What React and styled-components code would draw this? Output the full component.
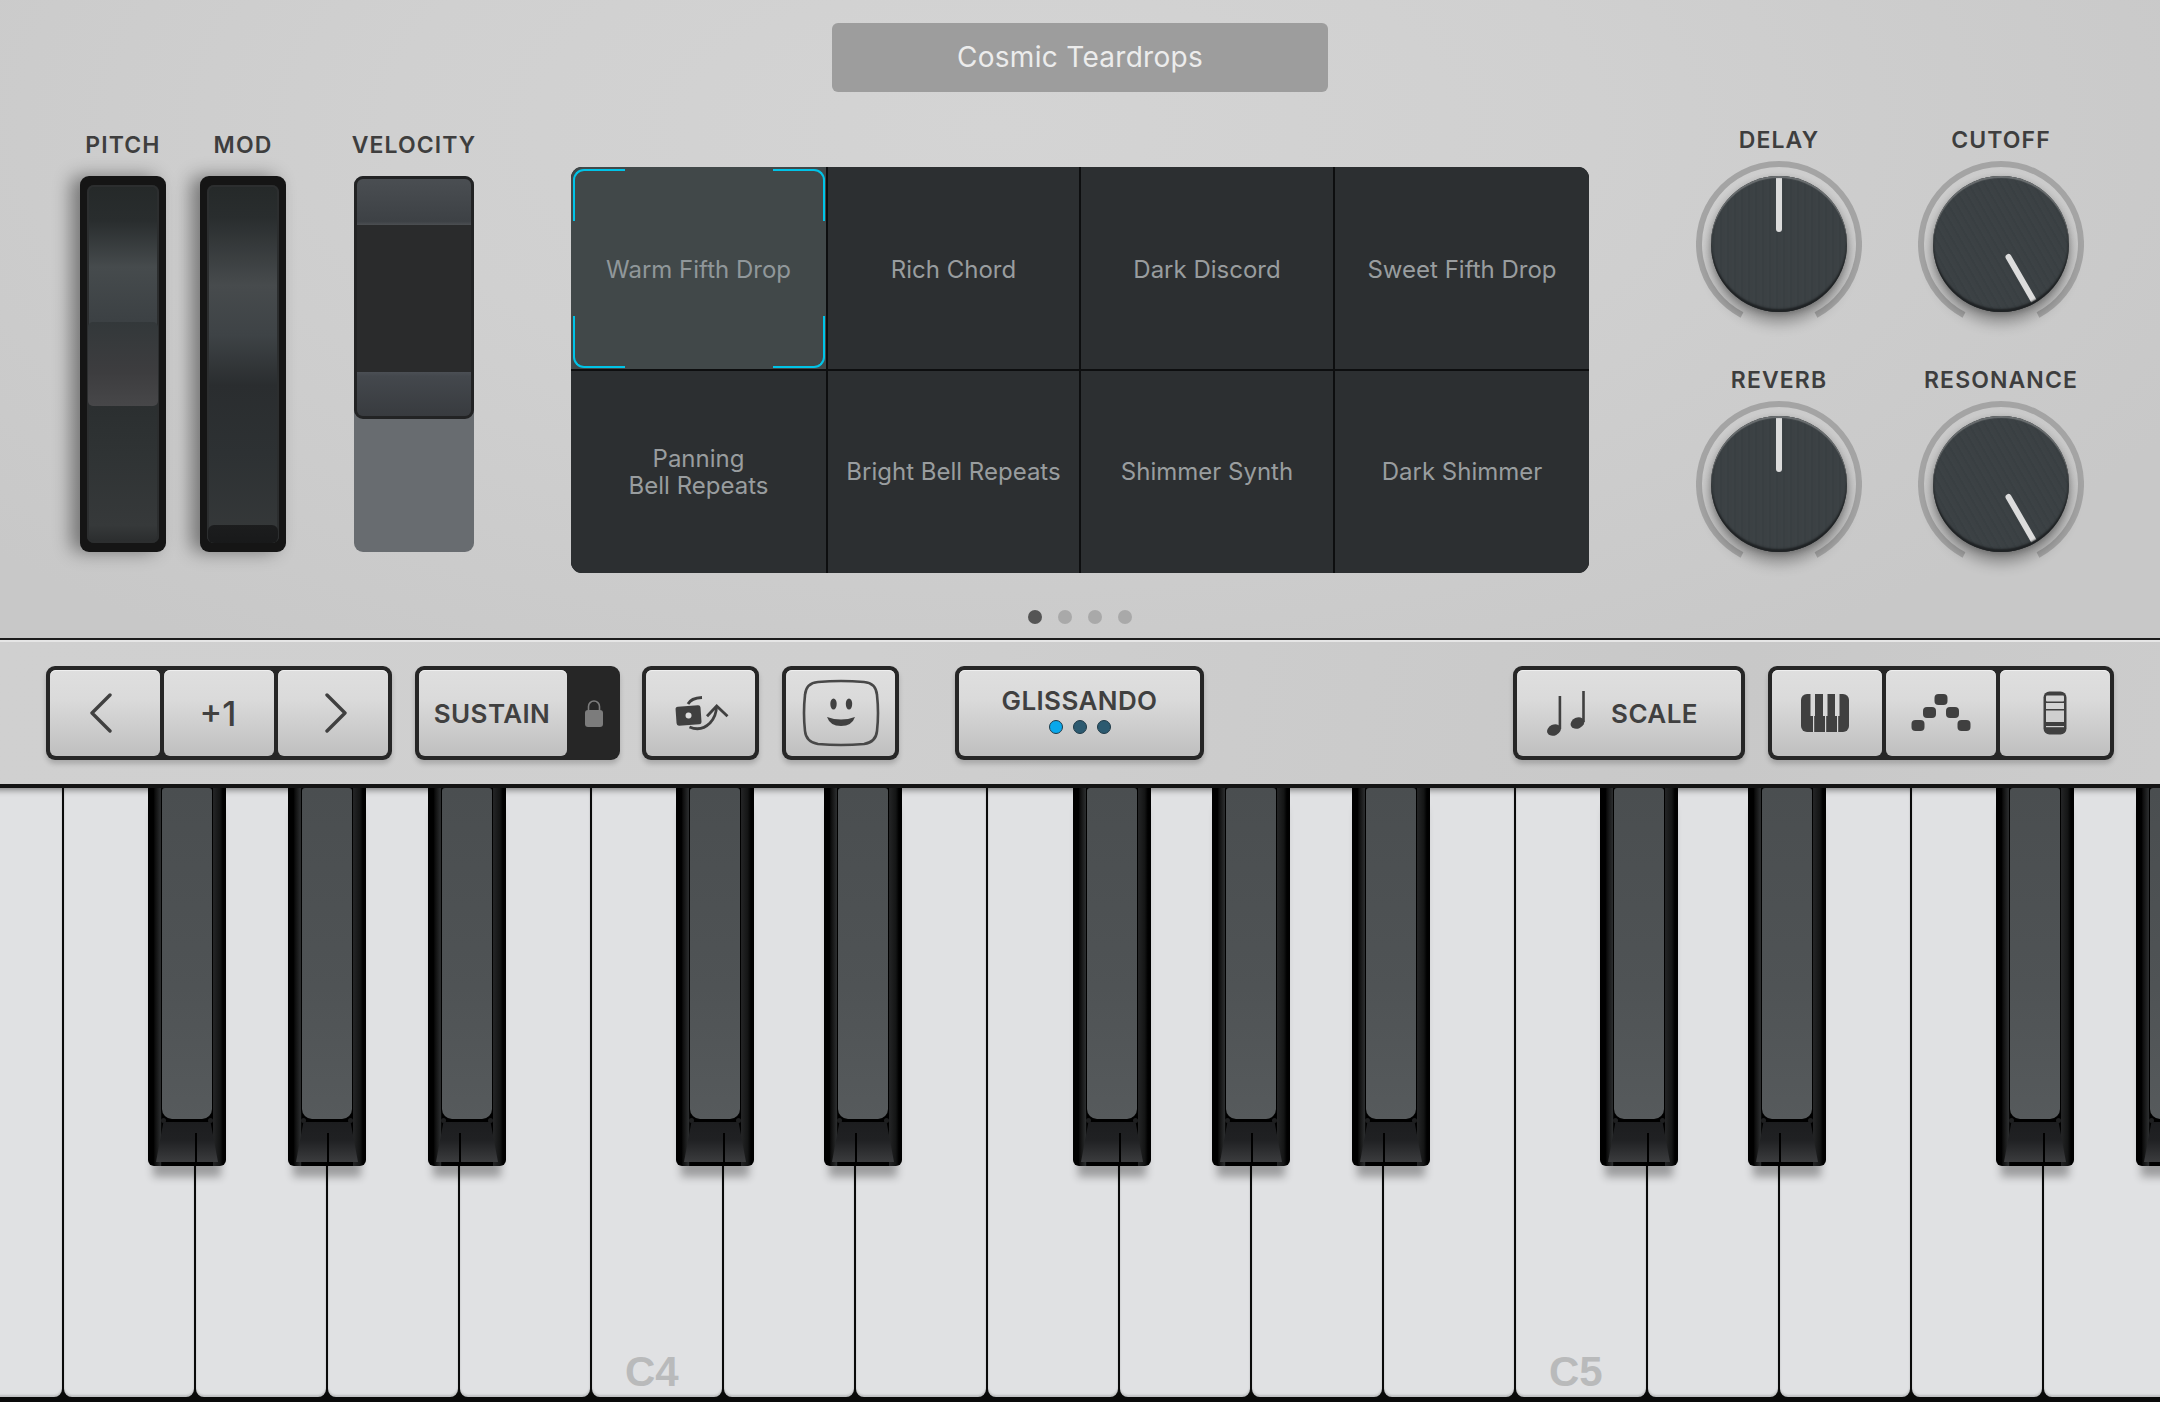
import React from 'react';
import styled, { createGlobalStyle } from 'styled-components';

const GlobalStyle = createGlobalStyle`
  html, body {
    margin: 0;
    padding: 0;
    background: #000;
  }
  body {
    font-family: Inter, "Liberation Sans", sans-serif;
    width: 2160px;
    height: 1402px;
    overflow: hidden;
  }
`;

const PADS = [
  'Warm Fifth Drop',
  'Rich Chord',
  'Dark Discord',
  'Sweet Fifth Drop',
  'Panning\nBell Repeats',
  'Bright Bell Repeats',
  'Shimmer Synth',
  'Dark Shimmer',
];

const KNOBS = [
  { label: 'DELAY', angle: 0 },
  { label: 'CUTOFF', angle: 150 },
  { label: 'REVERB', angle: 0 },
  { label: 'RESONANCE', angle: 150 },
];

const WHITE_KEYS = [
  '', '', '', '', '', 'C4', '', '', '', '', '', '', 'C5', '', '', '', '',
];

// left edge of each black key, and the white key gap that runs up into it
const BLACK_KEYS = [
  { left: 148, gap: 195 },
  { left: 288, gap: 327 },
  { left: 428, gap: 459 },
  { left: 676, gap: 723 },
  { left: 824, gap: 855 },
  { left: 1073, gap: 1119 },
  { left: 1212, gap: 1251 },
  { left: 1352, gap: 1383 },
  { left: 1600, gap: 1647 },
  { left: 1748, gap: 1779 },
  { left: 1996, gap: 2043 },
  { left: 2136, gap: 2175 },
];

function App() {
  return (
    <Page>
      <GlobalStyle />
      <TopPanel>
        <TitleBar>Cosmic Teardrops</TitleBar>
        <Controls>
          <Sliders>
            <SliderGroup>
              <Label>PITCH</Label>
              <Wheel>
                <WheelTrack $pitch>
                  <PitchThumb />
                </WheelTrack>
              </Wheel>
            </SliderGroup>
            <SliderGroup>
              <Label>MOD</Label>
              <Wheel>
                <WheelTrack>
                  <ModThumb />
                </WheelTrack>
              </Wheel>
            </SliderGroup>
            <VelocityGroup>
              <Label>VELOCITY</Label>
              <VelocityTrack>
                <VelocityThumb>
                  <VelocityCap $top />
                  <VelocityGap />
                  <VelocityCap />
                </VelocityThumb>
              </VelocityTrack>
            </VelocityGroup>
          </Sliders>
          <PadColumn>
            <PadGrid>
              {PADS.map((pad, i) => (
                <Pad key={pad} $selected={i === 0} $firstRow={i < 4}>
                  {i === 0 && (
                    <>
                      <Corner $v="top" $h="left" />
                      <Corner $v="top" $h="right" />
                      <Corner $v="bottom" $h="left" />
                      <Corner $v="bottom" $h="right" />
                    </>
                  )}
                  {pad}
                </Pad>
              ))}
            </PadGrid>
            <PageDots>
              <PageDot $active />
              <PageDot />
              <PageDot />
              <PageDot />
            </PageDots>
          </PadColumn>
          <KnobGrid>
            {KNOBS.map((knob) => (
              <KnobCell key={knob.label}>
                <Label>{knob.label}</Label>
                <Dial>
                  <RingSvg viewBox="0 0 166 166">
                    <path
                      d="M46 154 A80 80 0 1 1 120 154"
                      fill="none"
                      stroke="#a4a4a4"
                      strokeWidth="6"
                    />
                  </RingSvg>
                  <KnobCap>
                    <KnobFace $angle={knob.angle}>
                      <Pointer />
                    </KnobFace>
                  </KnobCap>
                </Dial>
              </KnobCell>
            ))}
          </KnobGrid>
        </Controls>
      </TopPanel>

      <Toolbar>
        <ButtonGroup>
          <KeyButton $w={110} $pr={8}>
            <svg width="24" height="40" viewBox="0 0 24 40">
              <path d="M21 2 L3 20 L21 38" fill="none" stroke="#404040" strokeWidth="3.4" strokeLinecap="round" strokeLinejoin="round" />
            </svg>
          </KeyButton>
          <KeyButton $w={110} $pr={2}>
            <OctaveText>+1</OctaveText>
          </KeyButton>
          <KeyButton $w={110} $pl={6}>
            <svg width="24" height="40" viewBox="0 0 24 40">
              <path d="M3 2 L21 20 L3 38" fill="none" stroke="#404040" strokeWidth="3.4" strokeLinecap="round" strokeLinejoin="round" />
            </svg>
          </KeyButton>
        </ButtonGroup>

        <SustainGroup>
          <KeyButton $w={148} $pt={2} $pr={2}>
            <ButtonText>SUSTAIN</ButtonText>
          </KeyButton>
          <LockSlot>
            <svg width="20" height="28" viewBox="0 0 20 28">
              <path d="M4.5 13 V7.5 a5.5 5.5 0 0 1 11 0 V13" fill="none" stroke="#7c7c7c" strokeWidth="1.6" />
              <rect x="1" y="11" width="18" height="17" rx="3" fill="#7c7c7c" />
            </svg>
          </LockSlot>
        </SustainGroup>

        <RotateGroup>
          <KeyButton $w={109}>
            <svg width="60" height="40" viewBox="0 0 60 40">
              <g transform="rotate(-4 17 22)">
                <rect x="5" y="13" width="25" height="19" rx="2.5" fill="#404040" />
                <circle cx="17.5" cy="22.5" r="3" fill="#ddd" />
              </g>
              <path d="M17 11 Q20 5 31 4.5" fill="none" stroke="#404040" strokeWidth="2.8" />
              <path d="M18.5 34 Q30 39 39 30 Q45.5 23 45.5 13" fill="none" stroke="#404040" strokeWidth="2.8" />
              <path d="M36 23.3 L45.7 13 L56.5 23.3" fill="none" stroke="#404040" strokeWidth="2.8" />
            </svg>
          </KeyButton>
        </RotateGroup>

        <FaceGroup>
          <KeyButton $w={109}>
            <svg width="78" height="68" viewBox="0 0 78 68">
              <path
                d="M16 3 Q39 1 62 3 Q74 4 75 16 Q77 34 75 52 Q74 63 62 65 Q39 67 16 65 Q4 63 3 52 Q1 34 3 16 Q4 4 16 3Z"
                fill="none"
                stroke="#484848"
                strokeWidth="2.6"
              />
              <ellipse cx="31.5" cy="25" rx="3.2" ry="5.5" fill="#404040" />
              <ellipse cx="47" cy="25" rx="3.2" ry="5.5" fill="#404040" />
              <path d="M25 38 Q39 43 53 38 Q50 47 39 47 Q28 47 25 38Z" fill="#404040" />
            </svg>
          </KeyButton>
        </FaceGroup>

        <GlissandoGroup>
          <KeyButton $w={241} $column $pb={5}>
            <ButtonText>GLISSANDO</ButtonText>
            <ModeDots>
              <ModeDot $on />
              <ModeDot />
              <ModeDot />
            </ModeDots>
          </KeyButton>
        </GlissandoGroup>

        <ScaleGroup>
          <KeyButton $w={224} $pr={13} $pt={1}>
            <svg width="40" height="46" viewBox="0 0 40 46">
              <g fill="#404040">
                <ellipse cx="7" cy="39" rx="7.2" ry="5.4" transform="rotate(-25 7 39)" />
                <rect x="11.6" y="5" width="2.6" height="33" />
                <ellipse cx="30.5" cy="32" rx="7.2" ry="5.4" transform="rotate(-25 30.5 32)" />
                <rect x="35.2" y="0" width="2.6" height="31" />
              </g>
            </svg>
            <ButtonText>SCALE</ButtonText>
          </KeyButton>
        </ScaleGroup>

        <ViewGroup>
          <KeyButton $w={110} $pr={4}>
            <svg width="48" height="38" viewBox="0 0 48 38">
              <rect width="48" height="38" rx="6" fill="#404040" />
              <g fill="#d8d8d8">
                <rect x="9.5" y="0" width="4.5" height="22" />
                <rect x="22" y="0" width="4.5" height="22" />
                <rect x="34" y="0" width="4.5" height="22" />
                <rect x="12" y="22" width="1.2" height="16" />
                <rect x="24" y="22" width="1.2" height="16" />
                <rect x="36" y="22" width="1.2" height="16" />
              </g>
            </svg>
          </KeyButton>
          <KeyButton $w={110}>
            <svg width="60" height="38" viewBox="0 0 60 38">
              <g fill="#404040">
                <rect x="23.5" y="0" width="13" height="11" rx="4" />
                <rect x="12" y="13" width="13" height="11" rx="4" />
                <rect x="35" y="13" width="13" height="11" rx="4" />
                <rect x="0.5" y="26" width="13" height="11" rx="4" />
                <rect x="46.5" y="26" width="13" height="11" rx="4" />
              </g>
            </svg>
          </KeyButton>
          <KeyButton $w={110}>
            <svg width="24" height="44" viewBox="0 0 24 44">
              <rect x="0.5" y="0.5" width="23" height="43" rx="6" fill="#404040" />
              <rect x="3" y="4.5" width="18" height="6" rx="1" fill="#d4d4d4" />
              <rect x="3" y="12" width="18" height="6" fill="#d4d4d4" />
              <rect x="3" y="19.5" width="18" height="11.5" fill="#cfcfcf" />
              <rect x="3" y="35" width="18" height="1.2" fill="#d0d0d0" />
            </svg>
          </KeyButton>
        </ViewGroup>
      </Toolbar>

      <Keyboard>
        <WhiteRow>
          {WHITE_KEYS.map((note, i) => (
            <WhiteKey key={i}>{note && <NoteName>{note}</NoteName>}</WhiteKey>
          ))}
        </WhiteRow>
        {BLACK_KEYS.map((key) => (
          <BlackKey key={key.left} style={{ left: key.left }}>
            <BlackTop />
            <BlackFront>
              <FrontSeam style={{ left: key.gap - key.left - 8 }} />
            </BlackFront>
          </BlackKey>
        ))}
      </Keyboard>
    </Page>
  );
}

const Page = styled.div`
  width: 2160px;
  height: 1402px;
  display: flex;
  flex-direction: column;
  overflow: hidden;
`;

const TopPanel = styled.div`
  height: 638px;
  flex: none;
  box-sizing: border-box;
  padding-top: 23px;
  background: radial-gradient(ellipse 62% 100% at 46% 20%, #d4d4d4 0%, #d0d0d0 45%, #c8c8c8 100%);
  display: flex;
  flex-direction: column;
  align-items: center;
`;

const TitleBar = styled.div`
  width: 496px;
  height: 69px;
  box-sizing: border-box;
  padding-bottom: 2px;
  border-radius: 6px;
  background: #9d9d9d;
  color: #ececec;
  font-size: 28px;
  letter-spacing: 0.3px;
  display: flex;
  align-items: center;
  justify-content: center;
`;

const Controls = styled.div`
  width: 100%;
  box-sizing: border-box;
  margin-top: 30px;
  padding-left: 80px;
  display: flex;
  align-items: flex-start;
`;

const Sliders = styled.div`
  display: flex;
  gap: 34px;
  padding-top: 8px;
  width: 491px;
`;

const SliderGroup = styled.div`
  width: 86px;
  display: flex;
  flex-direction: column;
  align-items: center;
  gap: 18px;
`;

const VelocityGroup = styled(SliderGroup)`
  width: 120px;
  margin-left: 34px;
`;

const Label = styled.div`
  height: 28px;
  line-height: 30px;
  font-size: 23px;
  font-weight: 600;
  letter-spacing: 1.1px;
  color: #3e3e3e;
  white-space: nowrap;
  text-align: center;
`;

const Wheel = styled.div`
  width: 86px;
  height: 376px;
  box-sizing: border-box;
  padding: 9px 7px;
  border-radius: 9px;
  background: #151515;
  box-shadow: -9px 0 18px rgba(0, 0, 0, 0.42);
`;

const WheelTrack = styled.div`
  position: relative;
  height: 100%;
  border-radius: 7px;
  box-shadow: inset 0 0 0 2px #2c2e2f;
  background: ${(p) =>
    p.$pitch
      ? 'linear-gradient(180deg, #252929 0%, #292d2e 10%, #464b4d 23%, #3c4144 38%, #2b2f30 62%, #2f3334 75%, #36393a 95%, #2a2c2d 100%)'
      : 'linear-gradient(180deg, #252929 0%, #292d2e 9%, #474b4d 28%, #3e4346 42%, #2a2d2f 56%, #2d3133 75%, #36393a 100%)'};
`;

const PitchThumb = styled.div`
  position: absolute;
  left: 1px;
  right: 1px;
  top: 137px;
  height: 84px;
  border-radius: 5px;
  background: linear-gradient(180deg, #33383a 0%, #3d3d3f 60%, #474749 100%);
`;

const ModThumb = styled.div`
  position: absolute;
  left: 1px;
  right: 1px;
  bottom: 0;
  height: 18px;
  border-radius: 6px;
  background: linear-gradient(180deg, #1c1d1e 0%, #18191a 100%);
`;

const VelocityTrack = styled.div`
  width: 120px;
  height: 376px;
  border-radius: 9px;
  background: #686c70;
`;

const VelocityThumb = styled.div`
  height: 243px;
  box-sizing: border-box;
  border: 3px solid #222324;
  border-radius: 9px;
  background: #2a2b2c;
  overflow: hidden;
  display: flex;
  flex-direction: column;
`;

const VelocityCap = styled.div`
  height: ${(p) => (p.$top ? 46 : 44)}px;
  flex: none;
  background: ${(p) =>
    p.$top
      ? 'linear-gradient(180deg, #4a4e52 0%, #3d4145 92%, #4c4f52 100%)'
      : 'linear-gradient(180deg, #4b4f55 0%, #44484d 10%, #383b3f 100%)'};
`;

const VelocityGap = styled.div`
  flex: 1;
`;

const PadColumn = styled.div`
  width: 1018px;
  padding-top: 45px;
  display: flex;
  flex-direction: column;
  align-items: center;
`;

const PadGrid = styled.div`
  width: 100%;
  height: 406px;
  display: grid;
  grid-template-columns: 255px 251px 252px 254px;
  grid-template-rows: 202px 202px;
  gap: 2px;
  background: #0d0e0f;
  border-radius: 11px;
  overflow: hidden;
`;

const Pad = styled.div`
  position: relative;
  display: flex;
  align-items: center;
  justify-content: center;
  text-align: center;
  white-space: pre-line;
  box-sizing: border-box;
  padding-top: ${(p) => (p.$firstRow ? 4 : 0)}px;
  font-size: 24px;
  line-height: 27.5px;
  color: ${(p) => (p.$selected ? '#90979a' : '#999d9f')};
  background: ${(p) => (p.$selected ? '#414849' : '#2c2f31')};
`;

const Corner = styled.span`
  position: absolute;
  width: 52px;
  height: 52px;
  box-sizing: border-box;
  ${(p) => p.$v}: ${(p) => (p.$v === 'top' ? 2 : 1)}px;
  ${(p) => p.$h}: ${(p) => (p.$h === 'left' ? 2 : 1)}px;
  border-${(p) => p.$v}: 2px solid #00c4e8;
  border-${(p) => p.$h}: 2px solid #00c4e8;
  border-${(p) => p.$v}-${(p) => p.$h}-radius: 11px;
`;

const PageDots = styled.div`
  margin-top: 37px;
  display: flex;
  gap: 16px;
`;

const PageDot = styled.div`
  width: 14px;
  height: 14px;
  border-radius: 50%;
  background: ${(p) => (p.$active ? '#555' : '#a9a9a9')};
`;

const KnobGrid = styled.div`
  margin-left: 107px;
  padding-top: 3px;
  display: grid;
  grid-template-columns: 166px 166px;
  column-gap: 56px;
  row-gap: 38px;
`;

const KnobCell = styled.div`
  display: flex;
  flex-direction: column;
  align-items: center;
  gap: 8px;
`;

const Dial = styled.div`
  position: relative;
  width: 166px;
  height: 166px;
  display: flex;
  align-items: center;
  justify-content: center;
`;

const RingSvg = styled.svg`
  position: absolute;
  inset: 0;
`;

const KnobCap = styled.div`
  position: relative;
  width: 136px;
  height: 136px;
  box-sizing: border-box;
  border-radius: 50%;
  background: #3a4043;
  box-shadow: 0 11px 14px rgba(0, 0, 0, 0.3), 0 2px 6px rgba(0, 0, 0, 0.25);
  &::after {
    content: '';
    position: absolute;
    inset: 0;
    border-radius: 50%;
    box-shadow: inset 0 2px 1px #6d7173, inset 0 -3px 2px #1f2224, inset 0 0 2px #222;
    pointer-events: none;
  }
`;

const KnobFace = styled.div`
  position: absolute;
  inset: 0;
  border-radius: 50%;
  transform: rotate(${(p) => p.$angle}deg);
  background: repeating-linear-gradient(
    90deg,
    rgba(255, 255, 255, 0.012) 0 2px,
    rgba(0, 0, 0, 0.018) 2px 4px,
    rgba(255, 255, 255, 0.008) 4px 7px
  );
`;

const Pointer = styled.div`
  position: absolute;
  left: 65px;
  top: 2px;
  width: 6px;
  height: 54px;
  background: #dcdcdc;
  border-radius: 0 0 3px 3px;
`;

const Toolbar = styled.div`
  height: 146px;
  flex: none;
  box-sizing: border-box;
  padding: 26px 46px 0 46px;
  border-top: 2px solid #1d1d1d;
  box-shadow: inset 0 2px 0 #e6e6e6;
  background: linear-gradient(100deg, #d0d0d0 0%, #cfcfcf 40%, #c8c8c8 80%, #cccccc 100%);
  display: flex;
  align-items: flex-start;
`;

const ButtonGroup = styled.div`
  display: flex;
  gap: 4px;
  padding: 4px;
  flex: none;
  background: #262626;
  border-radius: 9px;
  box-shadow: 0 4px 5px rgba(0, 0, 0, 0.18);
`;

const SustainGroup = styled(ButtonGroup)`
  margin-left: 23px;
  padding-right: 0;
  gap: 0;
`;

const RotateGroup = styled(ButtonGroup)`
  margin-left: 22px;
`;

const FaceGroup = styled(ButtonGroup)`
  margin-left: 23px;
`;

const GlissandoGroup = styled(ButtonGroup)`
  margin-left: 56px;
`;

const ScaleGroup = styled(ButtonGroup)`
  margin-left: auto;
`;

const ViewGroup = styled(ButtonGroup)`
  margin-left: 23px;
`;

const KeyButton = styled.div`
  width: ${(p) => p.$w}px;
  height: 86px;
  box-sizing: border-box;
  padding: ${(p) => p.$pt || 0}px ${(p) => p.$pr || 0}px ${(p) => p.$pb || 0}px ${(p) => p.$pl || 0}px;
  border-radius: 6px;
  background: linear-gradient(180deg, #dfdfdf 0%, #dadada 35%, #bfbfbf 100%);
  box-shadow: inset 0 1px 0 #efefef;
  color: #404040;
  display: flex;
  flex-direction: ${(p) => (p.$column ? 'column' : 'row')};
  align-items: center;
  justify-content: center;
  gap: ${(p) => (p.$column ? '5px' : '24px')};
`;

const OctaveText = styled.span`
  font-size: 34px;
  font-weight: 500;
  color: #404040;
`;

const ButtonText = styled.span`
  font-size: 26px;
  font-weight: 600;
  letter-spacing: 0.4px;
  line-height: 28px;
  color: #404040;
`;

const LockSlot = styled.div`
  width: 53px;
  display: flex;
  align-items: center;
  justify-content: center;
`;

const ModeDots = styled.div`
  display: flex;
  gap: 10px;
`;

const ModeDot = styled.div`
  width: 14px;
  height: 14px;
  box-sizing: border-box;
  border-radius: 50%;
  border: 1px solid #1f3a48;
  background: ${(p) => (p.$on ? '#08a8ec' : '#2c5a70')};
`;

const Keyboard = styled.div`
  position: relative;
  flex: 1;
  background: #0a0a0a;
  border-top: 4px solid #141414;
  overflow: hidden;
`;

const WhiteRow = styled.div`
  height: 609px;
  margin-left: -68px;
  display: flex;
  gap: 2px;
`;

const WhiteKey = styled.div`
  position: relative;
  width: 130px;
  flex: none;
  box-sizing: border-box;
  background: #e0e1e3;
  border-radius: 0 0 8px 8px;
  box-shadow: inset 0 8px 6px -6px rgba(0, 0, 0, 0.45), inset 0 -2px 2px rgba(0, 0, 0, 0.15);
`;

const NoteName = styled.span`
  position: absolute;
  left: 33px;
  bottom: 4px;
  font-family: "Liberation Sans", Arial, sans-serif;
  font-weight: 700;
  font-size: 42px;
  line-height: 1;
  color: #b9babb;
`;

const BlackKey = styled.div`
  position: absolute;
  top: 0;
  width: 78px;
  height: 378px;
  box-sizing: border-box;
  padding-left: 14px;
  border-radius: 0 0 6px 6px;
  background: linear-gradient(90deg, #000 0 7%, #0d0d0d 9%, #2a2c2d 16%, #0c0d0d 17%, #000 18%, #000 83%, #232425 84%, #141515 92%, #000 96%);
  box-shadow: 0 16px 8px -5px rgba(0, 0, 0, 0.3);
  &::before,
  &::after {
    content: '';
    position: absolute;
    top: 330px;
    width: 5px;
    height: 5px;
    border-radius: 50%;
    background: #1e1f20;
  }
  &::before {
    left: 13px;
  }
  &::after {
    left: 60px;
  }
`;

const BlackTop = styled.div`
  height: 331px;
  width: 50px;
  background: linear-gradient(180deg, #4a4e50 0%, #4f5355 60%, #565a5c 100%);
  border-radius: 3px 3px 10px 10px;
  box-shadow: 0 0 0 1px #000;
`;

const BlackFront = styled.div`
  position: absolute;
  left: 8px;
  right: 8px;
  bottom: 4px;
  height: 40px;
  background: linear-gradient(180deg, #1c1d1f 0%, #202123 45%, #3b3c3e 100%);
  clip-path: polygon(12% 0, 88% 0, 100% 100%, 0 100%);
`;

const FrontSeam = styled.div`
  position: absolute;
  bottom: 0;
  width: 1.5px;
  height: 29px;
  background: #000;
`;

export default App;
